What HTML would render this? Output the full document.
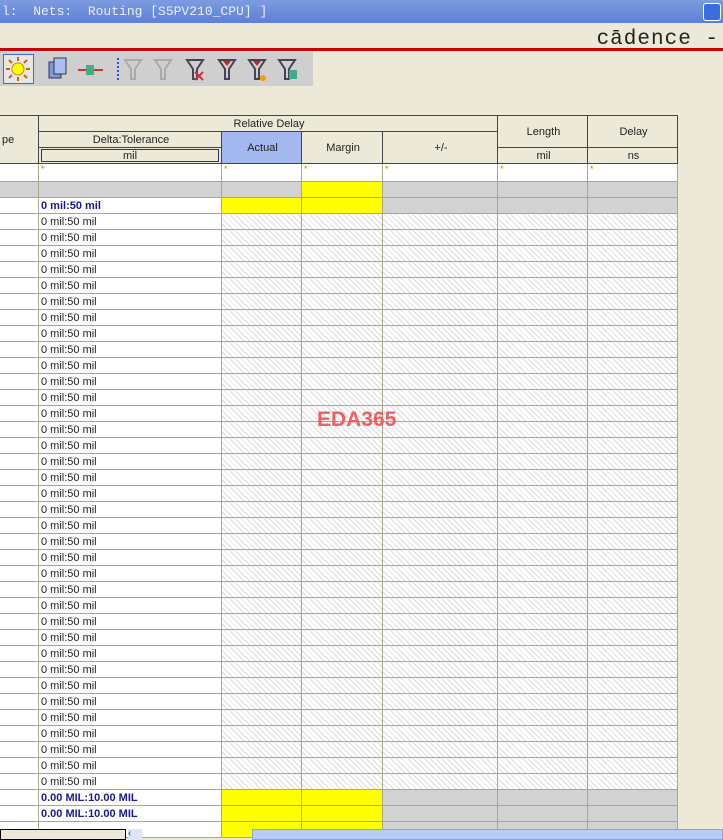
<!DOCTYPE html>
<html><head><meta charset="utf-8"><style>
*{margin:0;padding:0;box-sizing:border-box}
body{width:723px;height:840px;overflow:hidden;background:#ece9d8;font-family:"Liberation Sans",sans-serif;position:relative}
.title{position:absolute;left:0;top:0;width:723px;height:23px;background:linear-gradient(#7d9be0,#5e80d6);color:#e8eefc;font-family:"Liberation Mono",monospace;font-size:13px;line-height:23px;padding-left:2px;white-space:pre}
.minb{position:absolute;right:2px;top:3px;width:18px;height:18px;background:#3b6fe0;border:1px solid #fff;border-radius:3px}
.cad{position:absolute;right:4px;top:28px;font-family:"Liberation Mono",monospace;font-size:21px;color:#222;letter-spacing:1px}
.red{position:absolute;left:0;top:48px;width:723px;height:3px;background:#c00}
.tb{position:absolute;left:0;top:52px;width:313px;height:34px;background:#cfcfcf}
.sun{position:absolute;left:3px;top:54px;width:31px;height:30px;border:1px solid #3a6fd0;background:#e6e6e6}
table{position:absolute;left:-1px;top:115px;border-collapse:collapse;table-layout:fixed;font-size:11px}
td{border:1px solid #a9a68a;height:16px;padding:0 0 0 2px;white-space:nowrap;overflow:hidden;color:#222}
.h td{border-color:#444;text-align:center;background:#ece9d8;color:#222}
.w{background:#fff}
.g{background:#d2d2d2}
.y{background:#ff0}
.hat{background:repeating-linear-gradient(45deg,#fff 0 3px,#dcdcdc 3px 4px)}
.b{font-weight:bold;color:#1a1a8a}
.s{color:#b8860b;font-size:9px;vertical-align:top}
.wm{position:absolute;left:317px;top:408px;color:#f06060;font-size:21px;font-weight:bold}
.sb{position:absolute;top:829px;height:11px}
</style></head><body>
<div class="title">l:  Nets:  Routing [S5PV210_CPU] ]</div><div class="minb"></div>
<div class="cad">cādence -</div>
<div class="red"></div>
<div class="tb"></div><div class="sun"><svg width="29" height="28"><circle cx="14" cy="14" r="6" fill="#ff0" stroke="#c80"/><g stroke="#c60" stroke-width="2"><line x1="14" y1="2" x2="14" y2="6"/><line x1="14" y1="22" x2="14" y2="26"/><line x1="2" y1="14" x2="6" y2="14"/><line x1="22" y1="14" x2="26" y2="14"/><line x1="5" y1="5" x2="8" y2="8"/><line x1="20" y1="20" x2="23" y2="23"/><line x1="23" y1="5" x2="20" y2="8"/><line x1="5" y1="23" x2="8" y2="20"/></g></svg></div>
<svg style="position:absolute;left:45px;top:56px" width="270" height="28">
<rect x="4" y="6" width="12" height="16" fill="#7a9ad8" stroke="#335"/><rect x="9" y="2" width="12" height="16" fill="#a8c0ee" stroke="#335"/>
<line x1="33" y1="14" x2="58" y2="14" stroke="#c33" stroke-width="2"/><rect x="41" y="9" width="8" height="10" fill="#4a8"/>
<line x1="73" y1="2" x2="73" y2="26" stroke="#2a5ad0" stroke-width="2" stroke-dasharray="2 2"/>
<g fill="none" stroke="#aaa" stroke-width="2"><path d="M80 4h16l-6 9v10h-4v-10z"/><path d="M110 4h16l-6 9v10h-4v-10z"/></g>
<g fill="none" stroke="#445" stroke-width="2"><path d="M142 4h16l-6 9v10h-4v-10z"/><path d="M174 4h16l-6 9v10h-4v-10z"/><path d="M204 4h16l-6 9v10h-4v-10z"/><path d="M234 4h16l-6 9v10h-4v-10z"/></g>
<path d="M150 16l8 8M158 16l-8 8" stroke="#c33" stroke-width="2"/><path d="M178 5h8l-4 5z M208 5h8l-4 5z" fill="#c22"/><circle cx="218" cy="22" r="3" fill="#f90"/><rect x="244" y="14" width="8" height="9" fill="#4a8"/>
</svg>
<table>
<colgroup><col style="width:39px"><col style="width:183px"><col style="width:80px"><col style="width:81px"><col style="width:115px"><col style="width:90px"><col style="width:90px"></colgroup>
<tr class="h"><td rowspan="3" style="text-align:left">pe</td><td colspan="4">Relative Delay</td><td rowspan="2">Length</td><td rowspan="2">Delay</td></tr>
<tr class="h"><td>Delta:Tolerance</td><td rowspan="2" style="background:#a4b8f0">Actual</td><td rowspan="2">Margin</td><td rowspan="2">+/-</td></tr>
<tr class="h"><td style="padding:1px 2px"><div style="border:1px solid #336;height:13px;line-height:12px">mil</div></td><td>mil</td><td>ns</td></tr>
<tr style="height:18px"><td class="w"></td><td class="w s">*</td><td class="w s">*</td><td class="w s">*</td><td class="w s">*</td><td class="w s">*</td><td class="w s">*</td></tr>
<tr><td class="g"></td><td class="g"></td><td class="g"></td><td class="y"></td><td class="g"></td><td class="g"></td><td class="g"></td></tr>
<tr><td class="w"></td><td class="w b">0 mil:50 mil</td><td class="y"></td><td class="y"></td><td class="g"></td><td class="g"></td><td class="g"></td></tr>
<tbody id="rows"></tbody>
<tr><td class="w"></td><td class="w b">0.00 MIL:10.00 MIL</td><td class="y"></td><td class="y"></td><td class="g"></td><td class="g"></td><td class="g"></td></tr>
<tr><td class="w"></td><td class="w b">0.00 MIL:10.00 MIL</td><td class="y"></td><td class="y"></td><td class="g"></td><td class="g"></td><td class="g"></td></tr>
<tr><td class="w"></td><td class="w"></td><td class="y"></td><td class="y"></td><td class="g"></td><td class="g"></td><td class="g"></td></tr>
</table>
<div class="wm">EDA365</div>
<div class="sb" style="left:0;width:126px;background:#ece9d8;border:1px solid #000"></div>
<div class="sb" style="left:128px;width:14px;background:#dde6f8;font-size:10px;line-height:10px;color:#335">‹</div>
<div class="sb" style="left:252px;width:471px;background:#b8ccf4;border:1px solid #8aa2dc"></div>
<script>
var h='';for(var i=0;i<36;i++)h+='<tr><td class="w"></td><td class="w">0 mil:50 mil</td><td class="hat"></td><td class="hat"></td><td class="hat"></td><td class="hat"></td><td class="hat"></td></tr>';
document.getElementById('rows').innerHTML=h;
</script>
</body></html>
